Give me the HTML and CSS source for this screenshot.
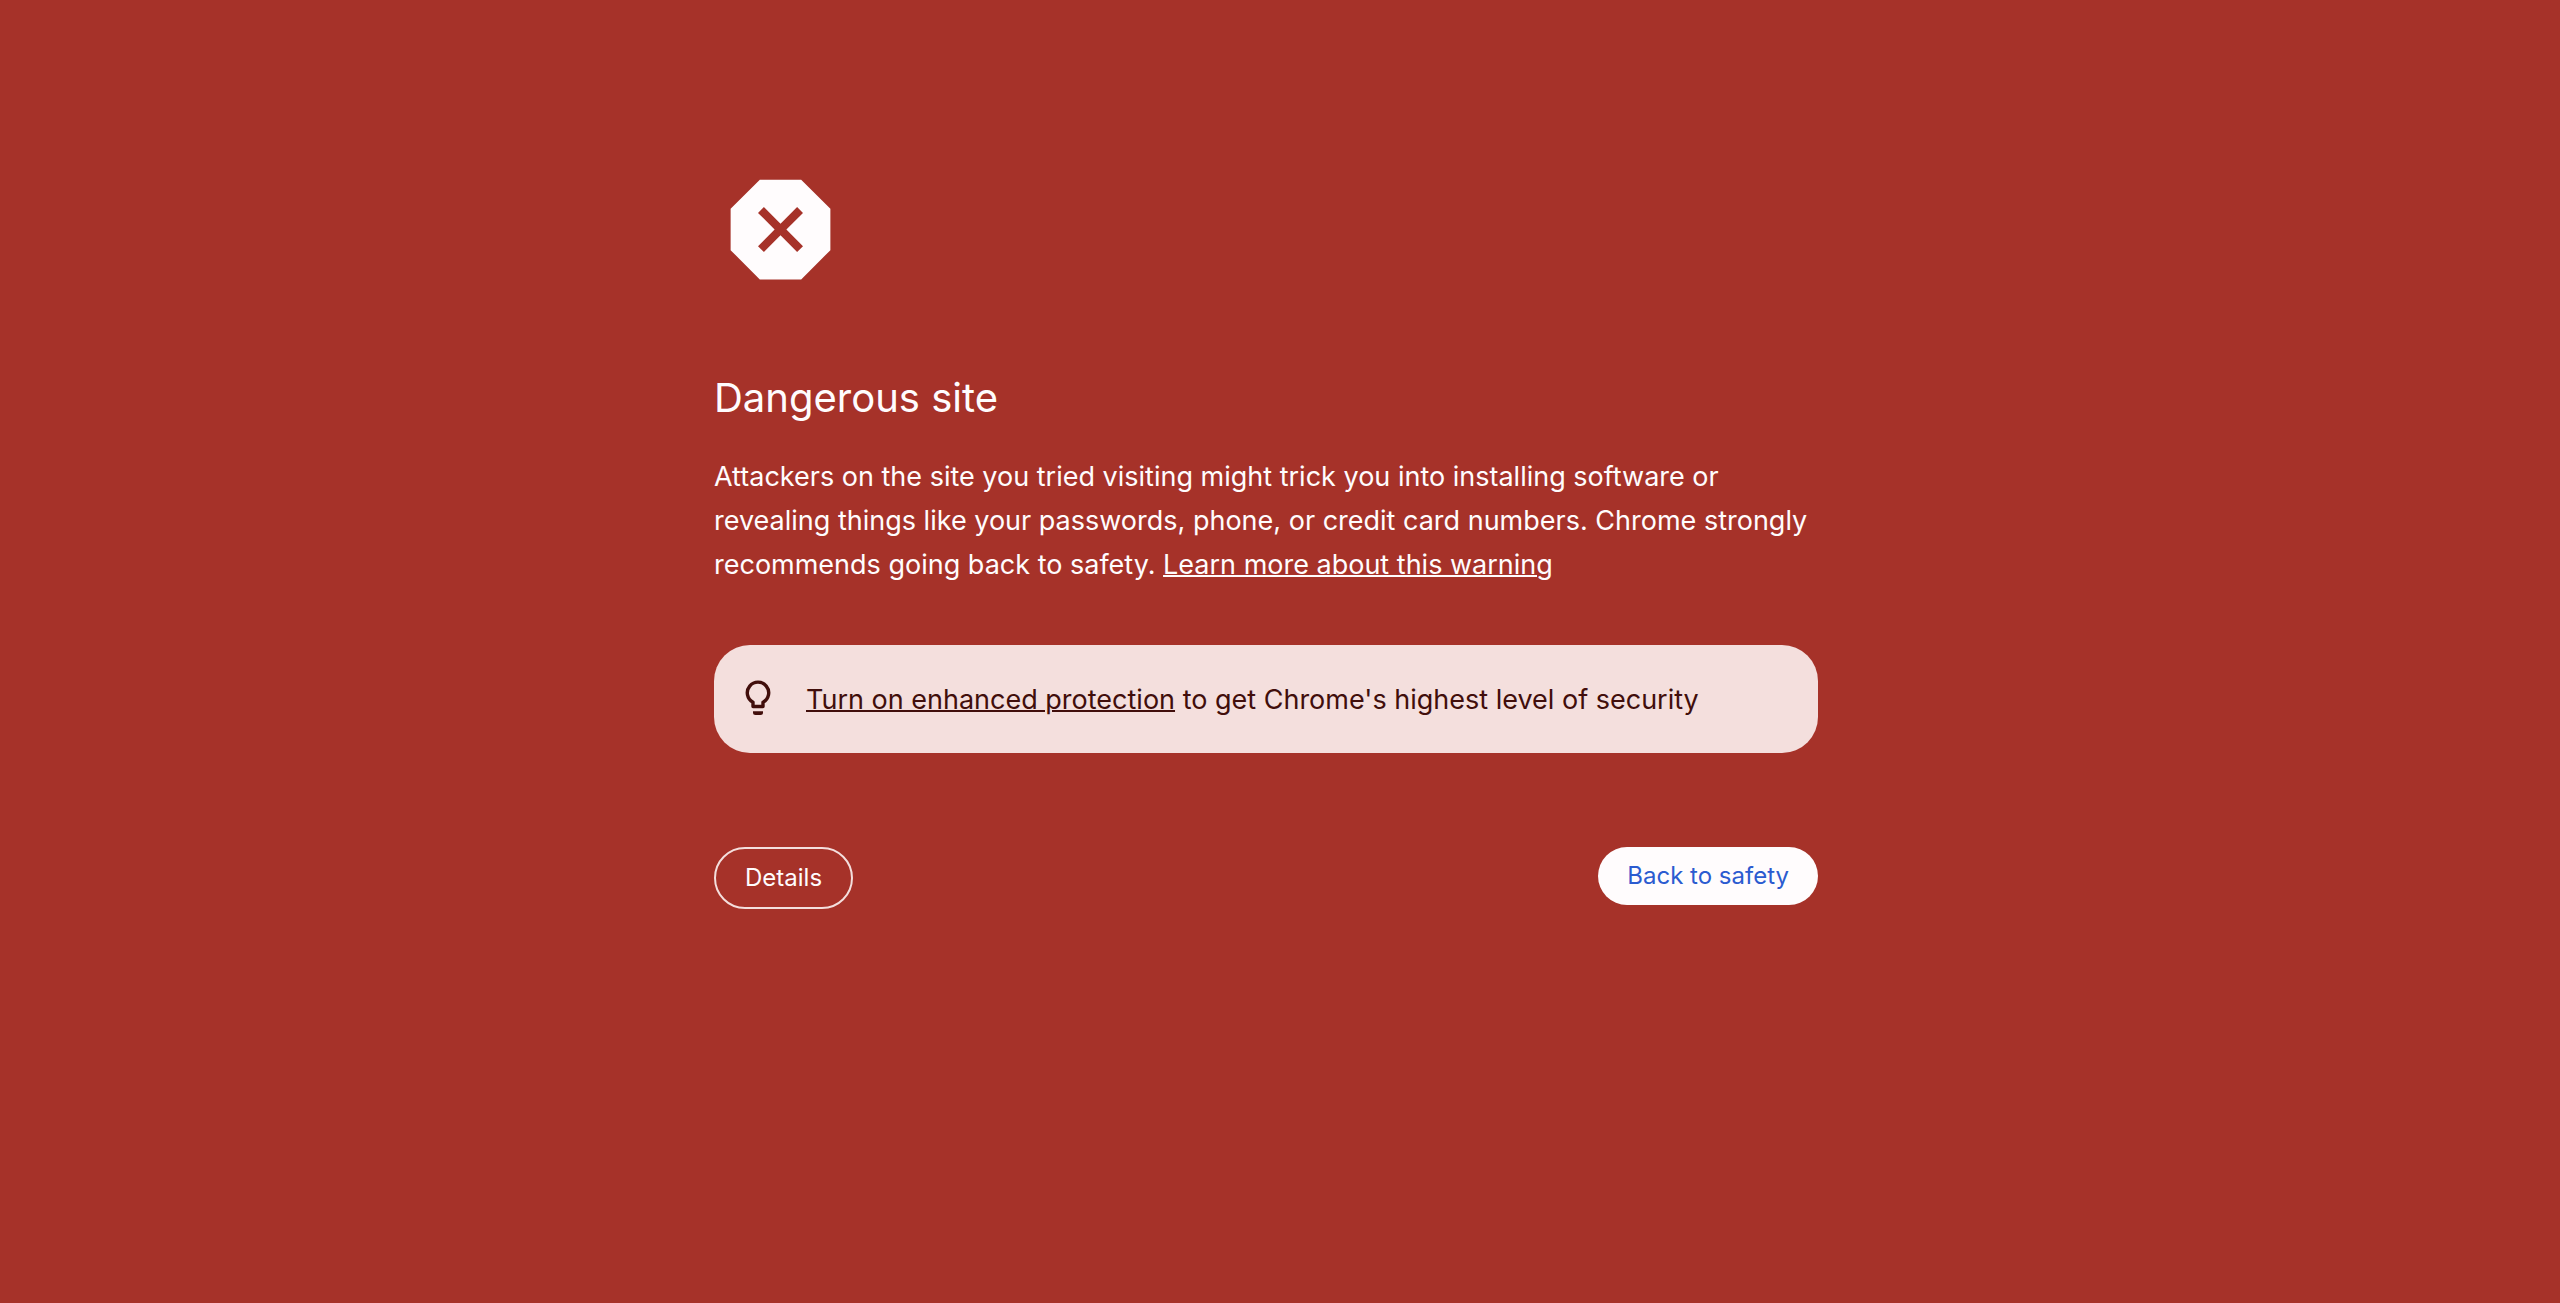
FILE: index.html
```
<!DOCTYPE html>
<html lang="en">
<head>
<meta charset="utf-8">
<meta name="viewport" content="width=device-width, initial-scale=1">
<title>Security error</title>
<link rel="stylesheet" href="styles.css">
</head>
<body>
<main class="interstitial">
  <svg class="danger-icon" viewBox="0 0 24 24" aria-hidden="true">
    <path fill="currentColor" fill-rule="evenodd" d="M8.27 3h7.46L21 8.27v7.46L15.73 21H8.27L3 15.73V8.27zM9 7.940 7.940 9 10.940 12 7.940 15 9 16.060 12 13.060 15 16.060 16.060 15 13.060 12 16.060 9 15 7.940 12 10.940z"/>
  </svg>
  <h1 class="title">Dangerous site</h1>
  <p class="message">Attackers on the site you tried visiting might trick you into installing software or revealing things like your passwords, phone, or credit card numbers. Chrome strongly recommends going back to safety. <a class="link" href="#">Learn more about this warning</a></p>
  <section class="promo">
    <svg class="bulb-icon" viewBox="0 0 26 36" aria-hidden="true">
      <path fill="none" stroke="currentColor" stroke-width="3.4" stroke-linejoin="round" d="M8 26.500V22.300A10.700 10.700 0 1 1 18 22.300V26.500Z"/>
      <path fill="currentColor" d="M8 31.200H18V32.500A2.500 2.500 0 0 1 15.500 35H10.500A2.500 2.500 0 0 1 8 32.500Z"/>
    </svg>
    <p class="promo-text"><a class="link" href="#">Turn on enhanced protection</a> to get Chrome's highest level of security</p>
  </section>
  <div class="actions">
    <button class="button details" type="button">Details</button>
    <button class="button primary" type="button">Back to safety</button>
  </div>
</main>
</body>
</html>
```
FILE: styles.css
```
* {
  box-sizing: border-box;
}

body {
  margin: 0;
  padding: 0 28px 0 0;
  min-height: 100vh;
  background: #a63229;
  color: #fffcfd;
  font-family: Inter, "Liberation Sans", sans-serif;
}

.interstitial {
  max-width: 1104px;
  margin: 0 auto;
  padding: 163px 0 64px;
}

.danger-icon {
  display: block;
  width: 133px;
  height: 133px;
}

.title {
  margin: 72px 0 27px;
  font-size: 40px;
  font-weight: 400;
  line-height: 60px;
}

.message {
  margin: 0;
  font-size: 27px;
  line-height: 44px;
}

.link {
  color: inherit;
  text-decoration: underline;
  text-decoration-thickness: 2px;
}

.promo {
  display: flex;
  align-items: center;
  gap: 35px;
  min-height: 108px;
  margin-top: 58px;
  padding: 22px 32px 20px 31px;
  border-radius: 36px;
  background: #f4dfdd;
  color: #410e0b;
}

.bulb-icon {
  flex: none;
  align-self: flex-start;
  width: 26px;
  height: 36px;
  margin-top: 13px;
}

.promo-text {
  margin: 0;
  font-size: 27px;
  line-height: 44px;
}

.actions {
  display: flex;
  justify-content: space-between;
  align-items: flex-start;
  margin-top: 94px;
}

.button {
  border: 0;
  border-radius: 32px;
  font-family: inherit;
  font-size: 24px;
  line-height: 58px;
  padding: 0 29px;
  cursor: pointer;
}

.details {
  border: 2px solid #f4dfdd;
  background: transparent;
  color: inherit;
}

.primary {
  background: #fffcfd;
  color: #2b5bd0;
}
```
